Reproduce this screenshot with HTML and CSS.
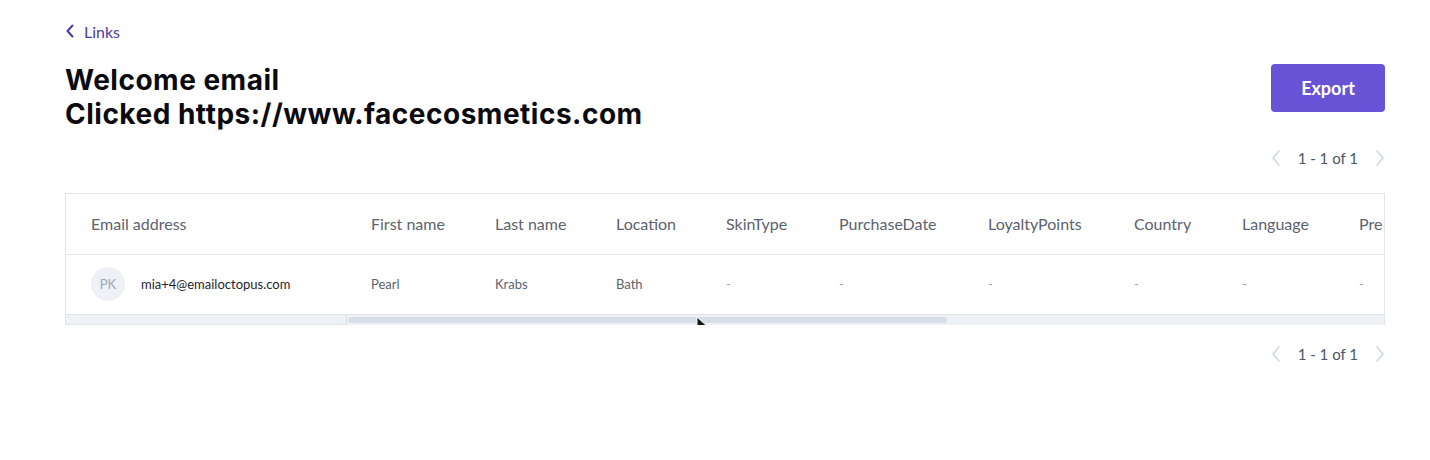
FILE: index.html
```html
<!DOCTYPE html>
<html>
<head>
<meta charset="utf-8">
<link rel="stylesheet" href="styles.css">
</head>
<body>
<div class="page">
  <a class="back" href="#">
    <svg width="10" height="14" viewBox="0 0 10 14"><path d="M7.5 1.5 L2.5 7 L7.5 12.5" fill="none" stroke="#4a3ba6" stroke-width="2" stroke-linecap="round" stroke-linejoin="round"/></svg>
    <span>Links</span>
  </a>
  <div class="head">
    <h1>Welcome email<br>Clicked https://www.facecosmetics.com</h1>
    <button class="export">Export</button>
  </div>
  <div class="pager top">
    <svg width="10" height="16" viewBox="0 0 10 16"><path d="M8 1 L2 8 L8 15" fill="none" stroke="#d3d7de" stroke-width="1.6" stroke-linecap="round" stroke-linejoin="round"/></svg>
    <span>1 - 1 of 1</span>
    <svg width="10" height="16" viewBox="0 0 10 16"><path d="M2 1 L8 8 L2 15" fill="none" stroke="#d3d7de" stroke-width="1.6" stroke-linecap="round" stroke-linejoin="round"/></svg>
  </div>
  <div class="table">
    <div class="row hrow">
      <div class="c c1">Email address</div>
      <div class="c">First name</div>
      <div class="c">Last name</div>
      <div class="c">Location</div>
      <div class="c">SkinType</div>
      <div class="c">PurchaseDate</div>
      <div class="c">LoyaltyPoints</div>
      <div class="c">Country</div>
      <div class="c">Language</div>
      <div class="c clip">Pre</div>
    </div>
    <div class="row brow">
      <div class="c c1"><span class="avatar">PK</span><span class="email">mia+4@emailoctopus.com</span></div>
      <div class="c">Pearl</div>
      <div class="c">Krabs</div>
      <div class="c">Bath</div>
      <div class="c dash">-</div>
      <div class="c dash">-</div>
      <div class="c dash">-</div>
      <div class="c dash">-</div>
      <div class="c dash">-</div>
      <div class="c dash clip">-</div>
    </div>
    <div class="scroll">
      <div class="sticky"></div>
      <div class="track"><div class="thumb"></div></div>
    </div>
    <svg class="cursor" width="14" height="20" viewBox="0 0 14 20"><path d="M1 1 L1 15 L4.5 11.5 L7 17.5 L9.5 16.5 L7 10.5 L11.5 10.5 Z" fill="#111" stroke="#fff" stroke-width="1"/></svg>
  </div>
  <div class="pager bottom">
    <svg width="10" height="16" viewBox="0 0 10 16"><path d="M8 1 L2 8 L8 15" fill="none" stroke="#d3d7de" stroke-width="1.6" stroke-linecap="round" stroke-linejoin="round"/></svg>
    <span>1 - 1 of 1</span>
    <svg width="10" height="16" viewBox="0 0 10 16"><path d="M2 1 L8 8 L2 15" fill="none" stroke="#d3d7de" stroke-width="1.6" stroke-linecap="round" stroke-linejoin="round"/></svg>
  </div>
</div>
</body>
</html>
```

FILE: styles.css
```css
* { box-sizing: border-box; }
html, body { margin: 0; padding: 0; background: #fff; }
body { font-family: Lato, "Open Sans", sans-serif; }
.page { padding: 21px 45px 0 65px; width: 1430px; }
.back { display: flex; align-items: center; gap: 9px; text-decoration: none; color: #4a3ba6; font-size: 16px; height: 20px; }
.head { display: flex; justify-content: space-between; align-items: flex-start; margin-top: 22px; }
h1 { margin: 0; font-family: Inter, sans-serif; font-weight: 700; font-size: 28px; line-height: 34px; color: #0b0b0f; letter-spacing: 0.5px; }
.export { margin-top: 1px; width: 114px; height: 48px; border: 0; border-radius: 4px; background: #6853d6; color: #fff; font-family: Lato, sans-serif; font-weight: 700; font-size: 18px; }
.pager { display: flex; justify-content: flex-end; align-items: center; gap: 17px; font-size: 15px; color: #4b5563; height: 20px; }
.pager.top { margin-top: 17px; }
.pager.bottom { margin-top: 19px; }
.table { position: relative; margin-top: 25px; border: 1px solid #dfe3ea; border-bottom: 0; overflow: hidden; }
.row { display: grid; grid-template-columns: 280px 124px 121px 110px 113px 149px 146px 108px 117px 1fr; align-items: center; border-bottom: 1px solid #dfe3ea; }
.hrow { height: 61px; padding-bottom: 1px; font-size: 16px; color: #5b6270; }
.brow { height: 60px; padding-bottom: 2px; font-size: 13px; color: #5b6270; }
.c { padding-left: 25px; white-space: nowrap; }
.c1 { padding-left: 25px; display: flex; align-items: center; }
.clip { overflow: hidden; }
.dash { color: #9ca3af; }
.avatar { width: 34px; height: 34px; border-radius: 50%; background: #eef1f6; color: #a0a8b5; font-size: 13px; display: flex; align-items: center; justify-content: center; margin-right: 16px; }
.email { color: #1f2430; }
.scroll { display: flex; height: 10px; }
.sticky { width: 281px; background: #eef1f5; border-right: 1px solid #d9dee6; border-bottom: 1px solid #dfe3ea; }
.track { flex: 1; background: #eef1f5; padding: 2px 0 0 1px; }
.thumb { width: 599px; height: 6px; border-radius: 3px; background: #d7dde6; }
.cursor { position: absolute; left: 630px; top: 122px; }
```
